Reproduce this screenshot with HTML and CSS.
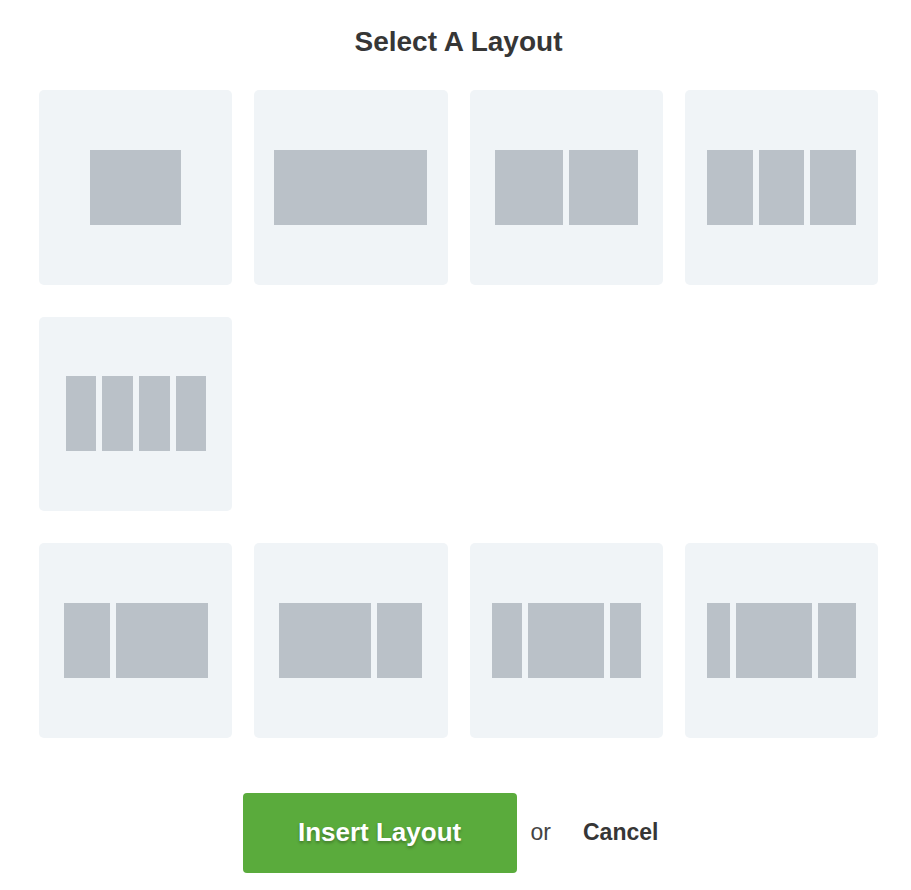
FILE: index.html
```html
<!DOCTYPE html>
<html lang="en">
<head>
<meta charset="utf-8">
<title>Select A Layout</title>
<link rel="stylesheet" href="styles.css">
</head>
<body>
<div class="modal">
  <h1 class="title">Select A Layout</h1>
  <div class="grid">
    <div class="card"><span class="col" style="width:91px"></span></div>
    <div class="card"><span class="col" style="width:153px"></span></div>
    <div class="card"><span class="col" style="width:68px"></span><span class="col" style="width:69px"></span></div>
    <div class="card"><span class="col" style="width:46px"></span><span class="col" style="width:45px"></span><span class="col" style="width:46px"></span></div>
    <div class="card"><span class="col" style="width:30px"></span><span class="col" style="width:31px"></span><span class="col" style="width:31px"></span><span class="col" style="width:30px"></span></div>
    <div class="card row-start"><span class="col" style="width:46px"></span><span class="col" style="width:92px"></span></div>
    <div class="card"><span class="col" style="width:92px"></span><span class="col" style="width:45px"></span></div>
    <div class="card"><span class="col" style="width:30px"></span><span class="col" style="width:76px"></span><span class="col" style="width:31px"></span></div>
    <div class="card"><span class="col" style="width:23px"></span><span class="col" style="width:76px"></span><span class="col" style="width:38px"></span></div>
  </div>
  <div class="actions">
    <button class="btn-insert">Insert Layout</button>
    <span class="or">or</span>
    <a class="cancel" href="#">Cancel</a>
  </div>
</div>
</body>
</html>
```

FILE: styles.css
```css
html, body {
  margin: 0;
  padding: 0;
  background: #ffffff;
}

body {
  font-family: "Liberation Sans", Arial, sans-serif;
}

.modal {
  width: 839px;
  margin-left: 39px;
  padding-top: 26px;
}

.title {
  margin: 0;
  font-size: 28px;
  line-height: 32px;
  font-weight: 700;
  color: #363636;
  text-align: center;
}

.grid {
  margin-top: 32px;
  display: grid;
  grid-template-columns: repeat(4, 1fr);
  column-gap: 22px;
  row-gap: 32px;
}

.row-start {
  grid-column: 1;
}

.card {
  height: 194.5px;
  background: #f0f4f7;
  border-radius: 5px;
  display: flex;
  align-items: center;
  justify-content: center;
  gap: 6px;
}

.col {
  display: block;
  height: 75px;
  background: #bac1c8;
}

.actions {
  margin-top: 55px;
  display: flex;
  align-items: center;
  justify-content: center;
}

.btn-insert {
  width: 274px;
  height: 80px;
  border: none;
  border-radius: 4px;
  background: #5aab3c;
  color: #ffffff;
  font-family: "Liberation Sans", Arial, sans-serif;
  font-size: 26px;
  font-weight: 700;
  text-shadow: 0 2px 3px rgba(0, 0, 0, 0.28);
  padding: 0;
  cursor: pointer;
}

.or {
  margin: 0 14px;
  font-size: 23px;
  color: #444444;
}

.cancel {
  padding: 0 16px 0 18px;
  font-size: 23px;
  font-weight: 700;
  color: #363636;
  text-decoration: none;
}
```
